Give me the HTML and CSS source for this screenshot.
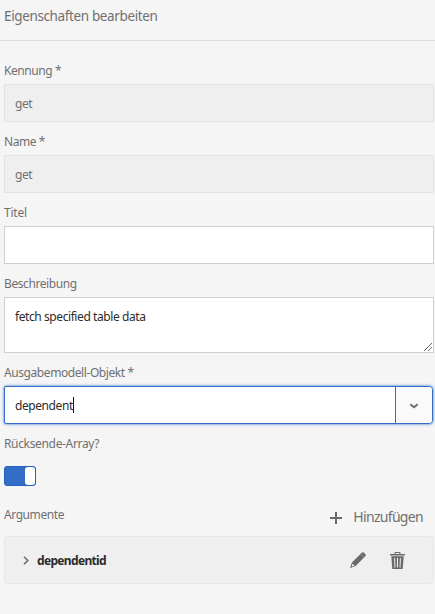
FILE: index.html
```html
<!DOCTYPE html>
<html lang="de">
<head>
<meta charset="utf-8">
<title>Eigenschaften bearbeiten</title>
<link rel="stylesheet" href="styles.css">
</head>
<body>
<header class="header"><h1 class="title">Eigenschaften bearbeiten</h1></header>
<main class="form">
  <div class="field">
    <div class="label"><span>Kennung *</span></div>
    <div class="input disabled"><span>get</span></div>
  </div>
  <div class="field">
    <div class="label"><span>Name *</span></div>
    <div class="input disabled"><span>get</span></div>
  </div>
  <div class="field">
    <div class="label"><span class="label-short">Titel</span></div>
    <div class="input"></div>
  </div>
  <div class="field">
    <div class="label"><span>Beschreibung</span></div>
    <div class="input textarea"><span>fetch specified table data</span>
      <svg class="grip" width="10" height="10" viewBox="0 0 10 10"><path d="M1 9L9 1M5 9L9 5"/></svg>
    </div>
  </div>
  <div class="field">
    <div class="label"><span>Ausgabemodell-Objekt *</span></div>
    <div class="select">
      <div class="select-value"><span>dependent</span><i class="caret"></i></div>
      <div class="select-button"><svg width="10" height="6" viewBox="0 0 10 6"><path d="M1.3 1.2L5 4.3L8.7 1.2"/></svg></div>
    </div>
  </div>
  <div class="field">
    <div class="label"><span class="label-array">Rücksende-Array?</span></div>
    <div class="switch"><i class="knob"></i></div>
  </div>
  <div class="arguments">
    <div class="label"><span>Argumente</span></div>
    <div class="add">
      <svg width="12" height="12" viewBox="0 0 12 12"><path d="M6 0V12M0 6H12"/></svg>
      <span>Hinzufügen</span>
    </div>
  </div>
  <div class="card">
    <svg class="chevron" width="6" height="9" viewBox="0 0 6 9"><path d="M1 .8L4.8 4.5L1 8.2"/></svg>
    <span class="card-name">dependentid</span>
    <svg class="pencil" width="16" height="16" viewBox="0 0 16 16"><path class="solid" d="M12 .6Q12.9-.2 13.7.5L15.6 2.4Q16.3 3.1 15.5 4L5.6 14L.1 16L1.9 10.4Z"/><path class="tip" d="M2.5 11.6L4.6 13.7L1.8 14.6Z"/><path class="notch" d="M10.6 1.9L14.2 5.4"/></svg>
    <svg class="trash" width="15" height="17" viewBox="0 0 15 17"><path class="solid" d="M0 2H4.5V1Q4.5 0 5.5 0H9.5Q10.5 0 10.5 1V2H15V3.5H0ZM5.6 2H9.4V1.1H5.6ZM1.3 4.2H13.7L12.7 17H2.3Z" fill-rule="evenodd"/><path class="slots" d="M4.6 6L5 15.5M7.5 6V15.5M10.4 6L10 15.5"/></svg>
  </div>
</main>
</body>
</html>
```
FILE: styles.css
```css
* { box-sizing: border-box; }
body { margin: 0; background: #f5f5f5; color: #707070; font: 12px/18px "Noto Sans", sans-serif; letter-spacing: -.42px; }
svg { display: block; fill: none; stroke: #6b6b6b; flex: none; overflow: visible; }
span { white-space: nowrap; }
.header { height: 41px; border-bottom: 1px solid #dedede; padding: 6px 4px; }
.title { margin: 0; font-size: 13.5px; line-height: 20px; font-weight: 400; letter-spacing: -.37px; }
.form { padding: 21px 1px 0 4px; }
.field { margin-bottom: 11px; }
.label { height: 22px; }
.label-short { letter-spacing: -.2px; }
.label-array { letter-spacing: -.34px; }
.input { height: 38px; border: 1px solid #cfcfcf; background: #fff; padding: 10px; color: #2c2c2c; }
.disabled { background: #efefef; border-color: #e3e3e3; color: #707070; }
.textarea { height: 56px; position: relative; }
.grip { position: absolute; right: 0; bottom: 0; stroke: #555; stroke-width: .9; }
.select { display: flex; height: 38px; width: 429px; border: 1px solid #326ec8; border-radius: 2px 4px 4px 2px; background: #fff; box-shadow: 0 0 3px #326ec8; color: #2c2c2c; }
.select-value { flex: 1; display: flex; align-items: center; padding: 2px 0 0 10px; }
.caret { width: 1px; height: 16px; margin-top: -2px; background: #111; }
.select-button { width: 37px; border-left: 1px solid #326ec8; background: #fafafa; border-radius: 0 3px 3px 0; display: flex; align-items: center; justify-content: center; padding-top: 2px; }
.select-button svg { stroke-width: 1.8; }
.switch { width: 32px; height: 20px; margin-top: 9px; background: #326ec8; border: 1px solid #2362bd; border-radius: 3px; display: flex; justify-content: flex-end; }
.field .switch { margin-top: 0; }
.field:has(.switch) .label { height: 31px; }
.knob { width: 10px; background: #fff; border-radius: 3px; }
.arguments { display: flex; justify-content: space-between; height: 39px; padding: 9px 11px 0 0; }
.add { display: flex; align-items: center; gap: 11px; height: 22px; font-size: 14px; letter-spacing: -.68px; }
.add svg { stroke-width: 2; margin-top: 2px; }
.card { height: 48px; border: 1px solid #e6e6e6; border-radius: 4px; background: #efefef; display: flex; align-items: center; padding: 0 28px 0 18px; }
.card-name { margin: 2px 0 0 8px; flex: 1; color: #2c2c2c; font-weight: 700; letter-spacing: -.66px; }
.chevron { stroke-width: 1.6; }
.solid { fill: #6b6b6b; stroke: none; }
.tip { fill: #efefef; stroke: none; }
.notch { stroke: #aaa; stroke-width: .7; }
.slots { stroke: #efefef; stroke-width: 1; }
.trash { margin-left: 24px; }
```
